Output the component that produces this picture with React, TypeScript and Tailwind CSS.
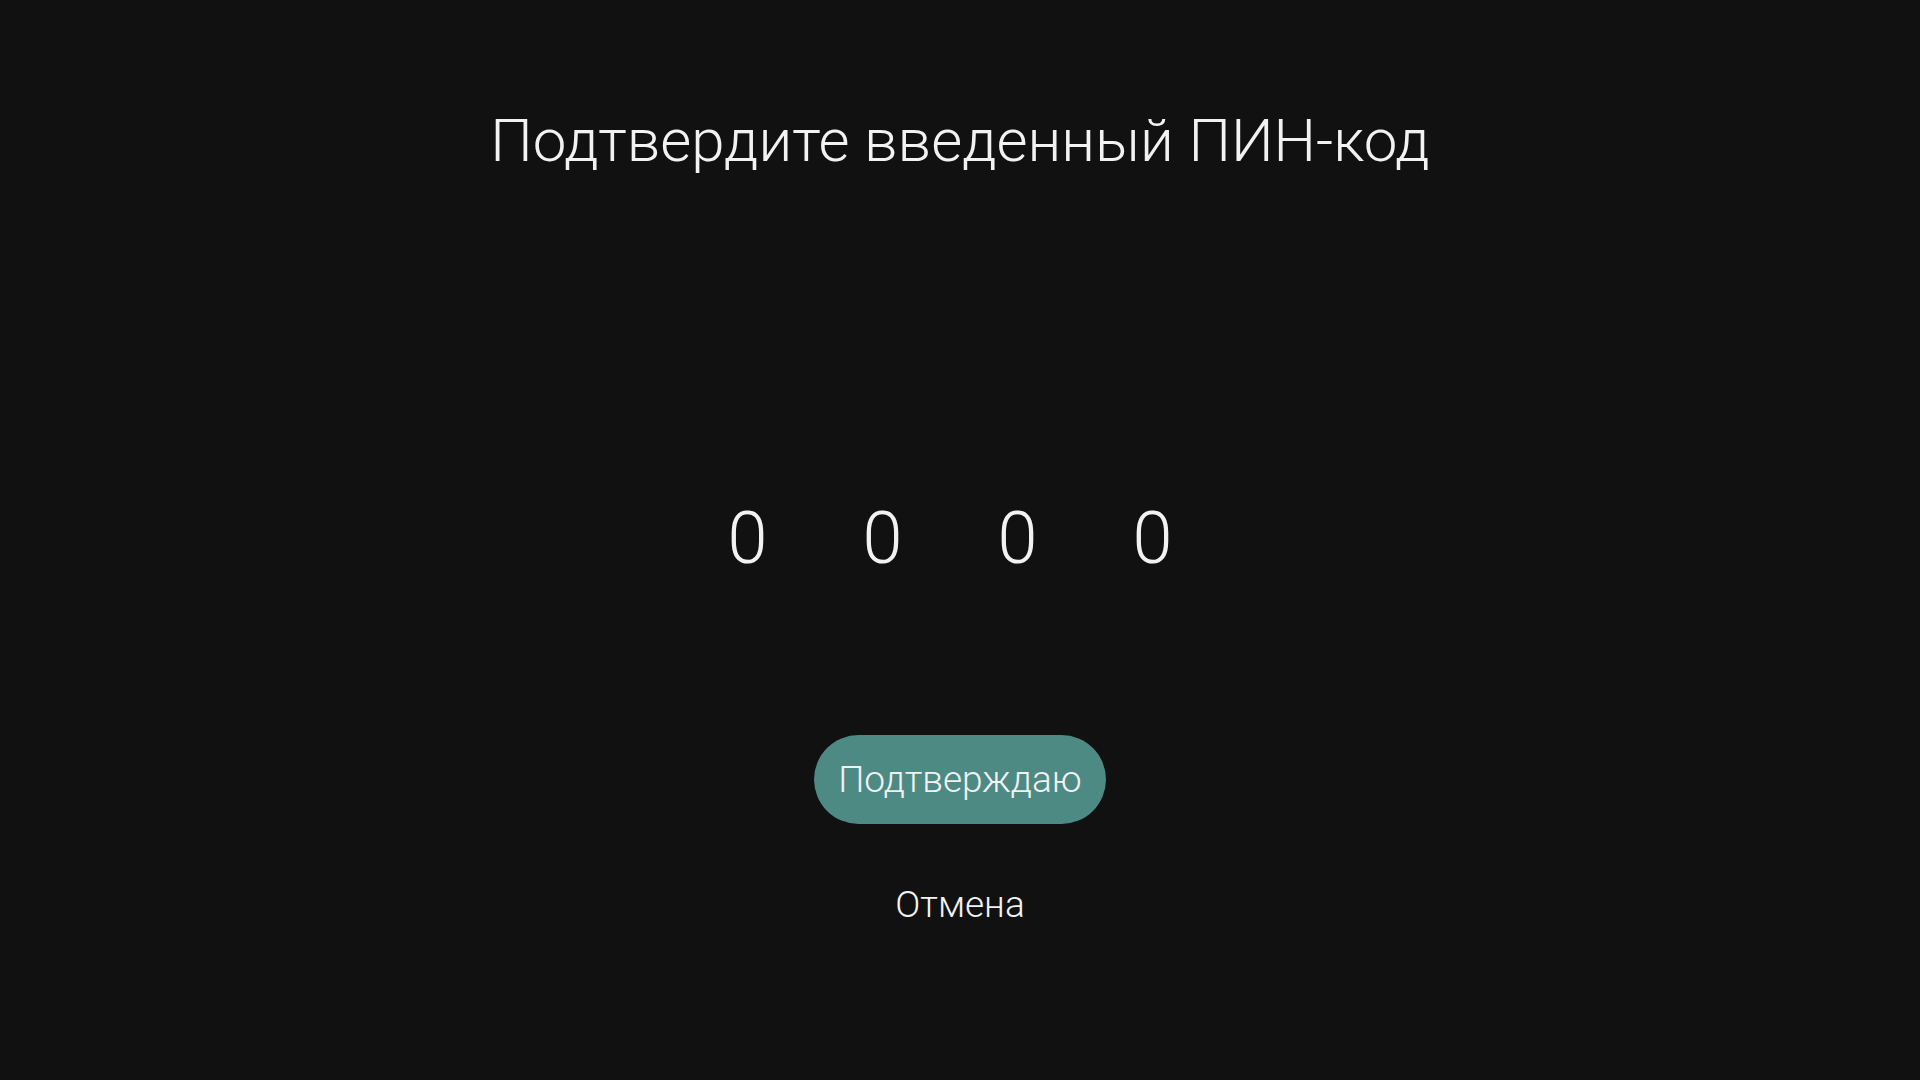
export default function App() {
  const digits = ["0", "0", "0", "0"];
  return (
    <div
      className="w-[1920px] h-[1080px] bg-[#111111] text-[#f2f2f2] flex flex-col items-center pt-[111px]"
      style={{ fontFamily: "Roboto, 'Noto Sans', sans-serif" }}
    >
      <h1 className="text-[60px] leading-[60px] font-light tracking-[0px]">
        Подтвердите введенный ПИН-код
      </h1>
      <div className="mt-[332px] flex pr-[20px]">
        {digits.map((d, i) => (
          <div
            key={i}
            className="w-[135px] flex justify-center text-[72px] leading-[72px] font-light"
          >
            {d}
          </div>
        ))}
      </div>
      <button className="mt-[160px] h-[89px] w-[292px] rounded-full bg-[#4e8a84] flex items-center justify-center text-[37px] leading-[37px] font-light text-[#f2f2f2]">
        Подтверждаю
      </button>
      <div className="mt-[62px] text-[37px] leading-[37px] font-light">
        Отмена
      </div>
    </div>
  );
}
